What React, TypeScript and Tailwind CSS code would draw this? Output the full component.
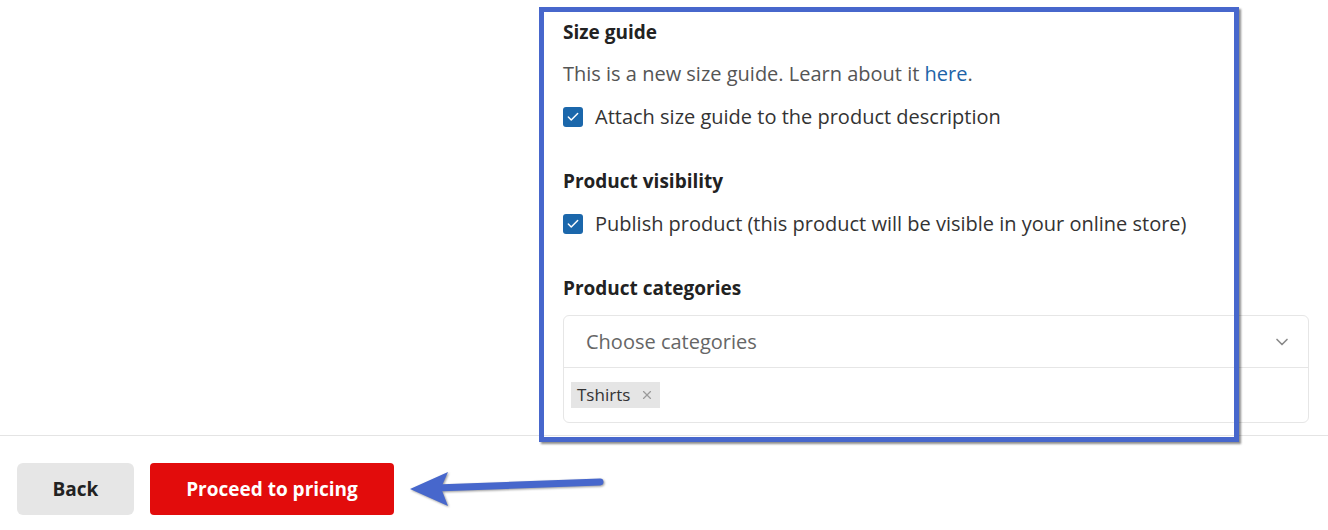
import { Check, ChevronDown, X } from "lucide-react";

function Checkbox({ label }: { label: string }) {
  return (
    <label className="flex h-6 items-center gap-3 text-[20px] text-[#333]">
      <span className="flex h-5 w-5 items-center justify-center rounded-[3px] bg-[#1b67ab]">
        <Check className="h-3.5 w-3.5 text-white" strokeWidth={2.5} />
      </span>
      {label}
    </label>
  );
}

export default function App() {
  return (
    <div className="relative h-[530px] w-[1328px] overflow-hidden bg-white font-['Open_Sans',sans-serif]">
      <div className="flex h-[436px] border-b border-[#e4e4e4]">
        <div className="w-[563px] shrink-0" />

        <div className="flex-1 pt-5 pr-[19px]">
          <h2 className="h-6 text-[19px] leading-6 font-bold text-[#222]">
            Size guide
          </h2>

          <p className="mt-[18px] h-6 text-[20px] leading-6 text-[#555]">
            This is a new size guide. Learn about it{" "}
            <a className="text-[#1d63a8]">here</a>.
          </p>

          <div className="mt-[19px]">
            <Checkbox label="Attach size guide to the product description" />
          </div>

          <h2 className="mt-10 h-6 text-[19px] leading-6 font-bold text-[#222]">
            Product visibility
          </h2>

          <div className="mt-[19px]">
            <Checkbox label="Publish product (this product will be visible in your online store)" />
          </div>

          <h2 className="mt-10 h-6 text-[19px] leading-6 font-bold text-[#222]">
            Product categories
          </h2>

          <div className="mt-[15px] rounded-md border border-[#e6e6e6]">
            <div className="flex h-[52px] items-center justify-between border-b border-[#e6e6e6] pr-4 pl-[22px]">
              <span className="text-[20px] text-[#666]">Choose categories</span>
              <ChevronDown className="h-5 w-5 text-[#8a8a8a]" strokeWidth={2} />
            </div>

            <div className="flex h-[54px] items-center px-[7px]">
              <span className="flex h-[26px] items-center gap-2.5 bg-[#e5e5e5] px-[6px] text-[17px] text-[#333]">
                Tshirts
                <X className="h-3.5 w-3.5 text-[#9a9a9a]" strokeWidth={2} />
              </span>
            </div>
          </div>
        </div>
      </div>

      <div className="flex gap-4 px-[17px] pt-[27px]">
        <button
          type="button"
          className="h-[52px] w-[117px] rounded-md bg-[#e6e6e6] text-[19px] font-bold text-[#222]"
        >
          Back
        </button>

        <button
          type="button"
          className="h-[52px] w-[244px] rounded-[4px] bg-[#e20c0c] text-[19px] font-bold text-white"
        >
          Proceed to pricing
        </button>
      </div>

      {/* annotation box */}
      <div className="pointer-events-none absolute top-[7px] left-[539px] h-[435px] w-[700px] border-[5px] border-[#4767cc] shadow-[2px_2px_2px_rgba(0,0,0,0.45)]" />

      {/* annotation arrow */}
      <svg
        className="pointer-events-none absolute top-[465px] left-[405px]"
        width="205"
        height="50"
        viewBox="0 0 205 50"
      >
        <g style={{ filter: "drop-shadow(1px 1px 1px rgba(0,0,0,0.4))" }}>
          <line
            x1="30"
            y1="23"
            x2="195"
            y2="17"
            stroke="#4767cc"
            strokeWidth="7"
            strokeLinecap="round"
          />
          <polygon points="5,24 43,7 36,23 43,41" fill="#4767cc" />
        </g>
      </svg>
    </div>
  );
}
